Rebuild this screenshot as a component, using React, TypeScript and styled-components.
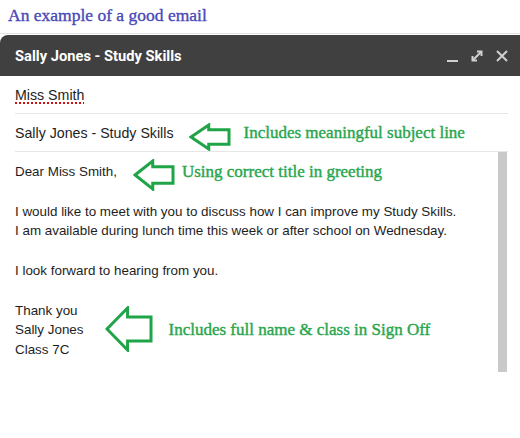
import styled, { createGlobalStyle } from "styled-components";

const GlobalStyle = createGlobalStyle`
  body {
    margin: 0;
    background: #ffffff;
  }
`;

const Page = styled.div`
  width: 520px;
  height: 438px;
  overflow: hidden;
  background: #fff;
`;

const Caption = styled.div`
  height: 34px;
  padding-left: 8px;
  box-sizing: border-box;
  font-family: "Liberation Serif", serif;
  font-size: 17.5px;
  -webkit-text-stroke: 0.35px #4848b8;
  line-height: 30px;
  color: #4848b8;
  border-bottom: 1px solid #e2e2e2;
`;

const Compose = styled.div`
  margin-top: 1px;
`;

const TitleBar = styled.div`
  height: 41px;
  background: #404040;
  border-top-left-radius: 8px;
  display: flex;
  align-items: center;
  padding: 0 11px 0 15px;
`;

const Title = styled.div`
  flex: 1;
  color: #fff;
  font-family: Roboto, "Liberation Sans", sans-serif;
  font-weight: bold;
  font-size: 14.7px;
`;

const Controls = styled.div`
  display: flex;
  align-items: center;
  gap: 11px;
`;

const Field = styled.div`
  height: 37px;
  margin: 0 12px 0 15px;
  border-bottom: 1px solid #e6e6e6;
  display: flex;
  align-items: center;
  font-family: "Liberation Sans", Arial, sans-serif;
  font-size: 14.2px;
  color: #1e1e1e;
`;

const Misspelled = styled.span`
  text-decoration: underline dotted #d01010;
  text-decoration-thickness: 2px;
  text-underline-offset: 3px;
`;

const Body = styled.div`
  display: grid;
  grid-template-columns: 1fr 9px;
  padding-right: 13px;
`;

const Text = styled.div`
  padding: 10px 0 0 15px;
  font-family: "Liberation Sans", Arial, sans-serif;
  font-size: 13.4px;
  color: #1e1e1e;
`;

const Line = styled.div<{ $gap?: number }>`
  height: 19.8px;
  line-height: 19.8px;
  display: flex;
  align-items: center;
  white-space: nowrap;
  margin-bottom: ${(p) => p.$gap ?? 0}px;
`;

const Note = styled.span<{ $left: number }>`
  margin-left: ${(p) => p.$left}px;
  font-family: "Liberation Serif", serif;
  font-size: 17px;
  -webkit-text-stroke: 0.4px #28a64c;
  color: #28a64c;
`;

const Scrollbar = styled.div`
  height: 220px;
  background: #c9c9c9;
`;

const ArrowSvg = styled.svg<{ $left: number; $dy: number }>`
  flex: none;
  margin-left: ${(p) => p.$left}px;
  position: relative;
  top: ${(p) => p.$dy}px;
`;

function Arrow({ w, h, left, dy = 0 }: { w: number; h: number; left: number; dy?: number }) {
  const m = h / 2;
  const hx = w * 0.47;
  const s1 = h * 0.24;
  const s2 = h * 0.76;
  return (
    <ArrowSvg $left={left} $dy={dy} width={w} height={h} viewBox={`0 0 ${w} ${h}`}>
      <polygon
        points={`2,${m} ${hx},2 ${hx},${s1} ${w - 2},${s1} ${w - 2},${s2} ${hx},${s2} ${hx},${h - 2}`}
        fill="none"
        stroke="#1fa548"
        strokeWidth={3}
        strokeLinejoin="miter"
      />
    </ArrowSvg>
  );
}

function WindowIcons() {
  return (
    <Controls>
      <svg width="13" height="14" viewBox="0 0 13 14">
        <rect x="1" y="11" width="11" height="2" fill="#d0d0d0" />
      </svg>
      <svg width="14" height="14" viewBox="0 0 14 14" fill="none" stroke="#d0d0d0" strokeWidth="2">
        <path d="M3 11 L11 3" />
        <path d="M7 2.5 H11.5 V7" />
        <path d="M2.5 7 V11.5 H7" />
      </svg>
      <svg width="14" height="14" viewBox="0 0 14 14" fill="none" stroke="#d0d0d0" strokeWidth="2">
        <path d="M2 2 L12 12 M12 2 L2 12" />
      </svg>
    </Controls>
  );
}

export default function App() {
  return (
    <Page>
      <GlobalStyle />
      <Caption>An example of a good email</Caption>
      <Compose>
        <TitleBar>
          <Title>Sally Jones - Study Skills</Title>
          <WindowIcons />
        </TitleBar>
        <Field>
          <Misspelled>Miss Smith</Misspelled>
        </Field>
        <Field>
          Sally Jones - Study Skills
          <Arrow w={42} h={28} left={15} dy={4} />
          <Note $left={13}>Includes meaningful subject line</Note>
        </Field>
        <Body>
          <Text>
            <Line $gap={19.8}>
              Dear Miss Smith,
              <Arrow w={42} h={32} left={16} dy={3} />
              <Note $left={7}>Using correct title in greeting</Note>
            </Line>
            <Line>I would like to meet with you to discuss how I can improve my Study Skills.</Line>
            <Line $gap={19.8}>I am available during lunch time this week or after school on Wednesday.</Line>
            <Line $gap={19.8}>I look forward to hearing from you.</Line>
            <Line>Thank you</Line>
            <Line>
              Sally Jones
              <Arrow w={48} h={46} left={22} dy={-1} />
              <Note $left={15}>Includes full name &amp; class in Sign Off</Note>
            </Line>
            <Line>Class 7C</Line>
          </Text>
          <Scrollbar />
        </Body>
      </Compose>
    </Page>
  );
}
